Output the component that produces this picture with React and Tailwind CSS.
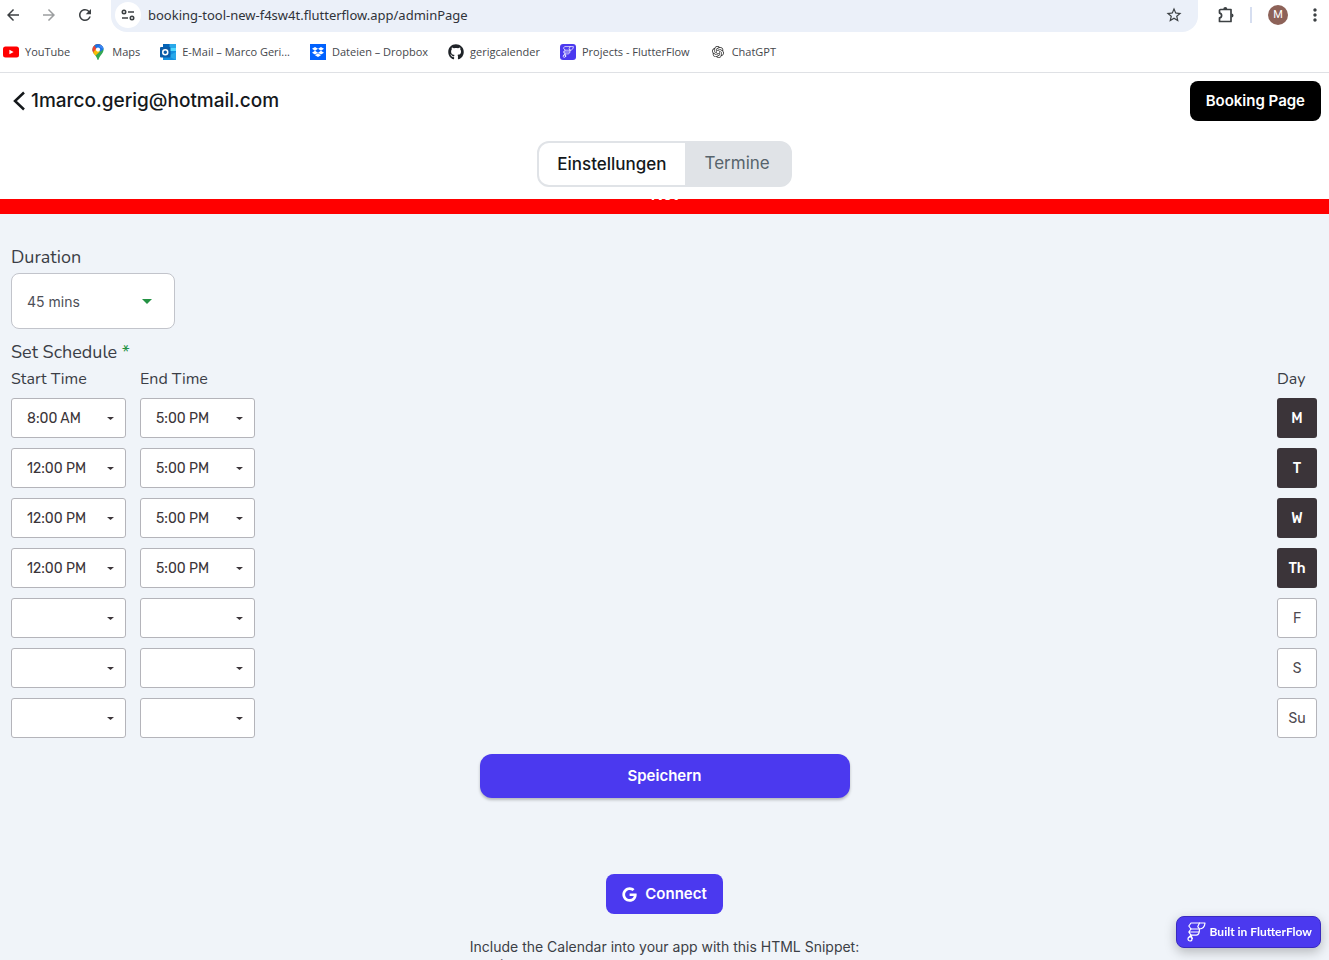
import { useState } from "react";
import { FaDropbox, FaGithub, FaGoogle } from "react-icons/fa";
import { MdArrowBack, MdArrowForward, MdRefresh, MdStarBorder, MdMoreVert } from "react-icons/md";
import { SiOpenai } from "react-icons/si";

const schedule = [
  { day: "M", name: "Monday", start: "8:00 AM", end: "5:00 PM", on: true },
  { day: "T", name: "Tuesday", start: "12:00 PM", end: "5:00 PM", on: true },
  { day: "W", name: "Wednesday", start: "12:00 PM", end: "5:00 PM", on: true },
  { day: "Th", name: "Thursday", start: "12:00 PM", end: "5:00 PM", on: true },
  { day: "F", name: "Friday", start: "", end: "", on: false },
  { day: "S", name: "Saturday", start: "", end: "", on: false },
  { day: "Su", name: "Sunday", start: "", end: "", on: false },
];

const times = ["", "8:00 AM", "12:00 PM", "5:00 PM"];

function YouTubeIcon() {
  return (
    <svg viewBox="0 0 16 16" className="size-4">
      <rect y="2.5" width="16" height="11" rx="2.5" fill="#f00" />
      <path d="M6.4 5.7v4.6L10.6 8z" fill="#fff" />
    </svg>
  );
}

function MapsIcon() {
  return (
    <svg viewBox="0 0 16 16" className="size-4">
      <clipPath id="pin">
        <path d="M8 0a5.6 5.6 0 0 0-5.6 5.6c0 2 .8 3.2 2.2 4.9C6 12.2 6.9 13.7 7.3 15.2c.2.9 1.200.9 1.400 0 .4-1.500 1.300-3 2.700-4.700 1.400-1.700 2.200-2.900 2.200-4.900A5.600 5.600 0 0 0 8 0z" />
      </clipPath>
      <g clipPath="url(#pin)">
        <rect width="16" height="16" fill="#34a853" />
        <path d="M0 14 L14 -2 L0 -2z" fill="#ea4335" />
        <path d="M3.6 0 L16 -3 L16 3.5 L10.5 7.5 L5.8 3.8z" fill="#1a73e8" />
        <path d="M9 2.5 L12 -1 L16 2 L13 5z" fill="#4285f4" />
        <path d="M0 12 L6 5 L10 7.5 L4 13z" fill="#fbbc04" />
        <circle cx="8" cy="5.6" r="2.1" fill="#fff" />
      </g>
    </svg>
  );
}

function OutlookIcon() {
  return (
    <svg viewBox="0 0 16 16" className="size-4">
      <rect x="3" y="0" width="13" height="8" fill="#28a8ea" />
      <rect x="3" y="0" width="6.500" height="5" fill="#0364b8" />
      <rect x="9.500" y="4" width="6.500" height="5" fill="#50d9ff" />
      <path d="M3 7h13v9H3z" fill="#1490df" />
      <path d="M16 8v8L8 12z" fill="#28a8ea" />
      <rect y="3" width="10.5" height="10.5" rx="1" fill="#0a5ca8" />
      <circle cx="5.250" cy="8.250" r="2.500" fill="none" stroke="#fff" strokeWidth="1.500" />
    </svg>
  );
}

function ExtensionIcon() {
  return (
    <svg viewBox="0 0 18 18" className="size-[18px]">
      <path d="M3.600 3.500H14v12H2.500v-3.600c2.800-.4 2.800-4.400 0-4.800V4.500a1 1 0 0 1 1.100-1z" fill="none" stroke="#3c4043" strokeWidth="1.700" strokeLinejoin="round" />
      <path d="M6.300 3a2 2 0 0 1 4 0zM14.500 7.500a2 2 0 0 1 0 4z" fill="#3c4043" />
    </svg>
  );
}

function FlutterFlowMark({ className }) {
  return (
    <svg viewBox="0 0 20 20" className={className} fill="none" stroke="#fff" strokeWidth="1.200" strokeLinejoin="round" strokeLinecap="round">
      <path d="M5 1h14c-.3 3.700-1.900 5.900-5.600 6H5L2.800 4z" />
      <path d="M13.500 1 11.800 4.600 13.400 7M5 7 2.800 10 5 13.200h5.400c2.300-.4 3.200-2.800 3-6.200M2.800 10h9.800" />
      <path d="M5 13.200 6.400 16.400M5 13.200 2.400 15.600" />
      <circle cx="4" cy="17" r="2" />
    </svg>
  );
}

function SiteControlsIcon() {
  return (
    <svg viewBox="0 0 16 16" className="size-4" fill="none" stroke="#3c4043" strokeWidth="1.600">
      <circle cx="4" cy="5" r="1.700" />
      <path d="M8 5h6M2 11h6" />
      <circle cx="12" cy="11" r="1.700" />
    </svg>
  );
}

function Caret({ className }) {
  return (
    <svg viewBox="0 0 10 5" preserveAspectRatio="none" className={`pointer-events-none absolute top-1/2 ${className}`}>
      <path d="M0 0h10L5 5z" fill="currentColor" />
    </svg>
  );
}

function TimeSelect({ label, value }) {
  return (
    <div className="relative w-[115px] text-[#3b3539]">
      <select
        aria-label={label}
        defaultValue={value}
        className="h-10 w-full appearance-none rounded-[3px] border border-[#b4b4ba] bg-white pt-[2px] pr-6 pl-[15px] font-['Rubik',Roboto,sans-serif] text-sm"
      >
        {times.map((t) => (
          <option key={t} value={t}>{t}</option>
        ))}
      </select>
      <Caret className="right-3 h-[3px] w-[7px] -translate-y-px" />
    </div>
  );
}

function Bookmark({ icon, children }) {
  return (
    <a href="#" className="flex items-center gap-[6px] whitespace-nowrap">
      {icon}
      <span>{children}</span>
    </a>
  );
}

function BrowserBar() {
  const iconButton = "flex size-6 items-center justify-center text-[#3c4043]";
  return (
    <div className="shrink-0 border-b border-[#dfe1e5] bg-white font-['Open_Sans',sans-serif]">
      <div className="flex h-8 items-start">
        <div className="flex h-[30px] items-center gap-3 pl-px">
          <button aria-label="Back" className={iconButton}><MdArrowBack className="size-[18px]" /></button>
          <button aria-label="Forward" className={`${iconButton} opacity-50`}><MdArrowForward className="size-[18px]" /></button>
          <button aria-label="Reload" className={iconButton}><MdRefresh className="size-[18px]" /></button>
        </div>
        <div className="ml-[14px] flex h-8 grow items-start rounded-b-2xl bg-[#ebf0f9] pr-3 pl-1">
          <div className="flex h-[30px] grow items-center">
            <button aria-label="Site information" className="flex size-[26px] items-center justify-center rounded-full bg-white"><SiteControlsIcon /></button>
            <input aria-label="Address" defaultValue="booking-tool-new-f4sw4t.flutterflow.app/adminPage" className="ml-[7px] h-6 grow bg-transparent font-['Noto_Sans',sans-serif] text-[13px] text-[#30333a] outline-none" />
            <button aria-label="Bookmark" className={iconButton}><MdStarBorder className="size-[18px]" /></button>
          </div>
        </div>
        <div className="flex h-[30px] items-center pr-[3px] pl-4">
          <button aria-label="Extensions" className={iconButton}><ExtensionIcon /></button>
          <span className="ml-3 h-4 w-[2px] bg-[#d6def0]" />
          <button aria-label="Profile" className="ml-4 flex size-5 items-center justify-center rounded-full bg-[#8d6258] font-['Roboto',sans-serif] text-[11px] text-white">M</button>
          <button aria-label="Menu" className="ml-4 flex h-6 w-[22px] items-center justify-center text-[#3c4043]"><MdMoreVert className="size-5" /></button>
        </div>
      </div>
      <nav className="flex h-10 items-center gap-5 pl-[3px] text-[11px] text-[#45474c]">
        <Bookmark icon={<YouTubeIcon />}>YouTube</Bookmark>
        <Bookmark icon={<MapsIcon />}>Maps</Bookmark>
        <Bookmark icon={<OutlookIcon />}>E-Mail – Marco Geri...</Bookmark>
        <Bookmark icon={<span className="flex size-4 items-center justify-center bg-[#0061fe]"><FaDropbox className="size-3 text-white" /></span>}>Dateien – Dropbox</Bookmark>
        <Bookmark icon={<FaGithub className="size-4 text-[#1f2328]" />}>gerigcalender</Bookmark>
        <Bookmark icon={<span className="flex size-4 items-center justify-center rounded-[3px] bg-[#4b39ef]"><FlutterFlowMark className="size-3" /></span>}>Projects - FlutterFlow</Bookmark>
        <Bookmark icon={<span className="flex size-4 items-center justify-center"><SiOpenai className="size-3 text-[#333]" /></span>}>ChatGPT</Bookmark>
      </nav>
    </div>
  );
}

export default function App() {
  const [tab, setTab] = useState("settings");
  return (
    <div className="flex h-screen flex-col overflow-hidden bg-[#f0f4f9] font-['Inter',sans-serif]">
      <BrowserBar />
      <header className="relative z-10 shrink-0 bg-white pb-3">
        <div className="flex items-center justify-between px-2 pt-2">
          <a href="#" className="flex items-center gap-[5px] pl-1 text-[19px] font-medium text-[#14181b]">
            <svg viewBox="0 0 14 20" className="h-5 w-[14px]" fill="none" stroke="currentColor" strokeWidth="2.500"><path d="M12 1.500 3 10l9 8.500" /></svg>
            1marco.gerig@hotmail.com
          </a>
          <button className="h-10 rounded-lg bg-black px-4 text-[15px] font-semibold text-white">Booking Page</button>
        </div>
        <div className="mt-5 flex justify-center">
          <div role="tablist" className="flex h-[46px] overflow-hidden rounded-xl border-2 border-[#e0e3e7] bg-[#e0e3e7] text-[17px]">
            <button role="tab" aria-selected={tab === "settings"} onClick={() => setTab("settings")} className="bg-white px-[18px] pt-[2px] font-medium text-[#14181b]">Einstellungen</button>
            <button role="tab" aria-selected={tab === "dates"} onClick={() => setTab("dates")} className="px-5 text-[#57636c]">Termine</button>
          </div>
        </div>
      </header>
      <main className="min-h-0 grow overflow-hidden">
        <div className="-mt-[25px] flex h-10 items-center justify-center bg-[#ff0000] text-base font-semibold text-white">Not</div>
        <div className="px-[11px] pt-[31px] font-['Nunito','Noto_Sans',sans-serif] text-[#3b3e46]">
          <label htmlFor="duration" className="block text-lg leading-6">Duration</label>
          <div className="relative mt-1 w-[164px]">
            <select id="duration" defaultValue="45 mins" className="h-14 w-full appearance-none rounded-lg border border-[#c2c4cb] bg-white px-[15px] pt-[2px] font-['Inter',sans-serif] text-sm text-[#4d5058]">
              <option>45 mins</option>
              <option>60 mins</option>
            </select>
            <Caret className="right-[23px] h-[5px] w-[10px] -translate-y-[2px] text-[#249244]" />
          </div>
          <h2 className="mt-[11px] text-lg leading-6">Set Schedule <span className="text-[#249244]">*</span></h2>
          <div className="mt-[3px] flex justify-between pr-px text-base leading-6">
            <div className="flex gap-[14px]">
              <span className="w-[115px]">Start Time</span>
              <span className="w-[115px]">End Time</span>
            </div>
            <span className="w-10">Day</span>
          </div>
          <div className="mt-[7px] flex flex-col gap-[10px] pr-px">
            {schedule.map((row) => (
              <div key={row.day} className="flex justify-between">
                <div className="flex gap-[14px]">
                  <TimeSelect label={`${row.name} start time`} value={row.start} />
                  <TimeSelect label={`${row.name} end time`} value={row.end} />
                </div>
                <button
                  aria-label={row.day}
                  aria-pressed={row.on}
                  className={`size-10 rounded-[3px] pt-[2px] font-['Rubik',Roboto,sans-serif] text-sm ${row.on ? "bg-[#3b3439] font-medium text-white" : "border border-[#b4b4ba] bg-white text-[#4d4a50]"}`}
                >
                  {row.day}
                </button>
              </div>
            ))}
          </div>
        </div>
        <div className="mt-4 flex flex-col items-center">
          <button className="h-11 w-[370px] rounded-xl bg-[#4b39ef] text-[15px] font-semibold text-white shadow-[0_2px_3px_rgba(0,0,0,0.25)]">Speichern</button>
          <button className="mt-[76px] flex h-10 items-center gap-2 rounded-lg bg-[#4b39ef] px-4 text-[15px] font-semibold text-white"><FaGoogle className="size-[15px]" />Connect</button>
          <div className="mt-6 whitespace-nowrap text-sm leading-[18px] text-[#3c4046]">
            <p>Include the Calendar into your app with this HTML Snippet:</p>
            <p>{"<script src="}</p>
          </div>
        </div>
      </main>
      <a href="#" className="fixed right-2 bottom-3 z-20 flex h-8 items-center gap-1 rounded-lg border border-[#3a2ac0] bg-[#4b39ef] pr-2 pl-[9px] font-['Lato',sans-serif] text-xs font-bold text-white shadow-[0_4px_12px_rgba(0,0,0,0.25)]">
        <FlutterFlowMark className="size-5" />
        Built in FlutterFlow
      </a>
    </div>
  );
}
